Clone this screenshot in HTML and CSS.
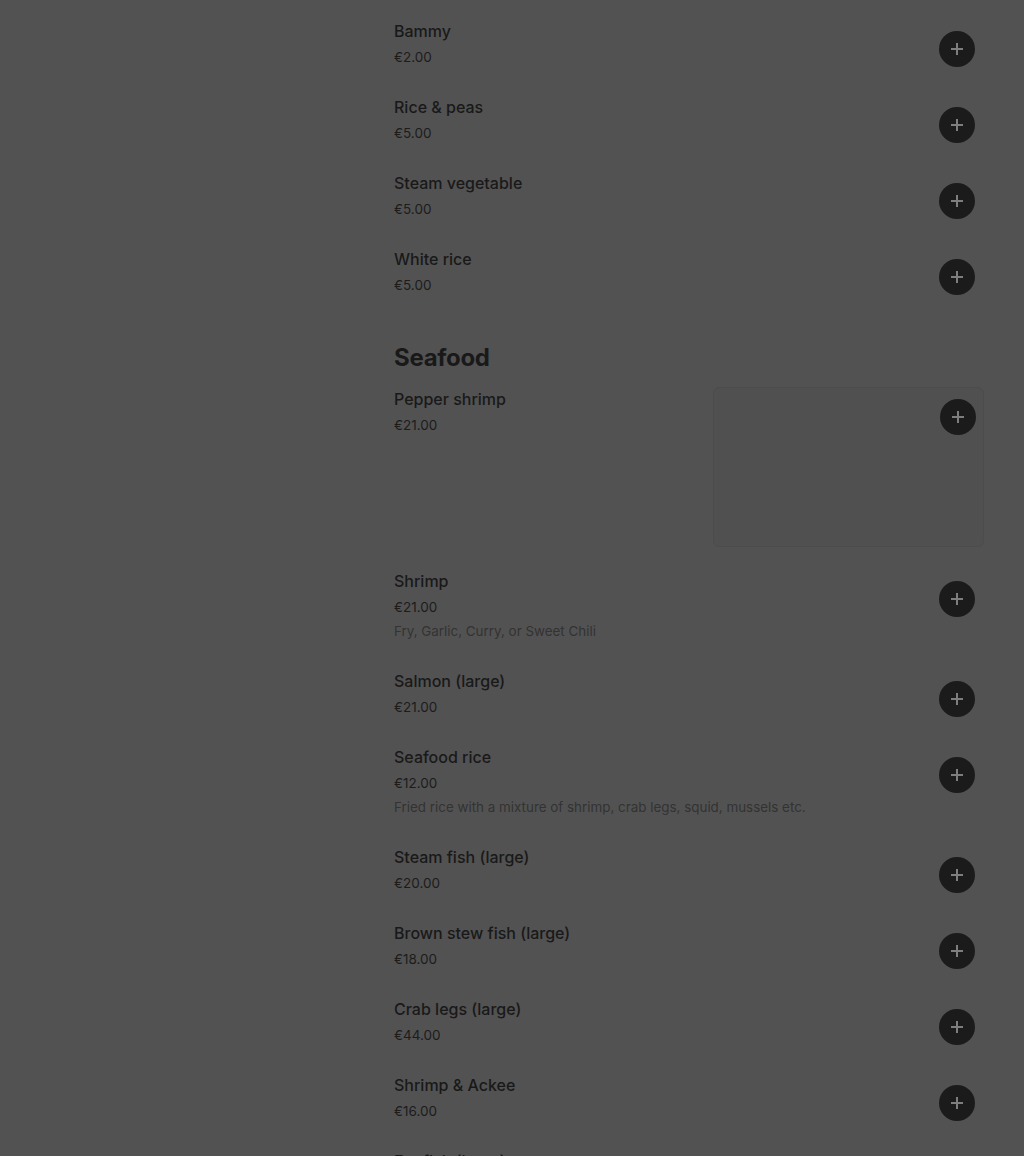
FILE: index.html
```html
<!DOCTYPE html>
<html lang="en">
  <head>
    <meta charset="UTF-8" />
    <meta name="viewport" content="width=device-width, initial-scale=1.0" />
    <title>Menu</title>
    <link rel="stylesheet" href="styles.css">
  </head>
  <body>
    <div class="menu">
      <!-- Sides -->
      <div class="item">
        <div class="item-info">
          <h3>Bammy</h3>
          <p class="price">€2.00</p>
        </div>
        <button class="add" aria-label="Add"><span></span></button>
      </div>
      <div class="item">
        <div class="item-info">
          <h3>Rice &amp; peas</h3>
          <p class="price">€5.00</p>
        </div>
        <button class="add" aria-label="Add"><span></span></button>
      </div>
      <div class="item">
        <div class="item-info">
          <h3>Steam vegetable</h3>
          <p class="price">€5.00</p>
        </div>
        <button class="add" aria-label="Add"><span></span></button>
      </div>
      <div class="item">
        <div class="item-info">
          <h3>White rice</h3>
          <p class="price">€5.00</p>
        </div>
        <button class="add" aria-label="Add"><span></span></button>
      </div>

      <!-- Seafood -->
      <h2 class="section-title">Seafood</h2>
      <div class="item with-image">
        <div class="item-info">
          <h3>Pepper shrimp</h3>
          <p class="price">€21.00</p>
        </div>
        <div class="item-image">
          <button class="add" aria-label="Add"><span></span></button>
        </div>
      </div>
      <div class="item">
        <div class="item-info">
          <h3>Shrimp</h3>
          <p class="price">€21.00</p>
          <p class="desc">Fry, Garlic, Curry, or Sweet Chili</p>
        </div>
        <button class="add" aria-label="Add"><span></span></button>
      </div>
      <div class="item">
        <div class="item-info">
          <h3>Salmon (large)</h3>
          <p class="price">€21.00</p>
        </div>
        <button class="add" aria-label="Add"><span></span></button>
      </div>
      <div class="item">
        <div class="item-info">
          <h3>Seafood rice</h3>
          <p class="price">€12.00</p>
          <p class="desc">Fried rice with a mixture of shrimp, crab legs, squid, mussels etc.</p>
        </div>
        <button class="add" aria-label="Add"><span></span></button>
      </div>
      <div class="item">
        <div class="item-info">
          <h3>Steam fish (large)</h3>
          <p class="price">€20.00</p>
        </div>
        <button class="add" aria-label="Add"><span></span></button>
      </div>
      <div class="item">
        <div class="item-info">
          <h3>Brown stew fish (large)</h3>
          <p class="price">€18.00</p>
        </div>
        <button class="add" aria-label="Add"><span></span></button>
      </div>
      <div class="item">
        <div class="item-info">
          <h3>Crab legs (large)</h3>
          <p class="price">€44.00</p>
        </div>
        <button class="add" aria-label="Add"><span></span></button>
      </div>
      <div class="item">
        <div class="item-info">
          <h3>Shrimp &amp; Ackee</h3>
          <p class="price">€16.00</p>
        </div>
        <button class="add" aria-label="Add"><span></span></button>
      </div>
      <div class="item">
        <div class="item-info">
          <h3>Fry fish (large)</h3>
          <p class="price">€18.00</p>
        </div>
        <button class="add" aria-label="Add"><span></span></button>
      </div>
    </div>
  </body>
</html>
```

FILE: styles.css
```css
* {
  margin: 0;
  padding: 0;
  box-sizing: border-box;
}

html,
body {
  height: 100%;
  overflow: hidden;
}

body {
  font-family: Inter, "Liberation Sans", Arial, sans-serif;
  background-color: #525252;
  color: #161616;
}

.menu {
  width: 590px;
  margin-left: 394px;
  padding-top: 7px;
}

.item {
  display: flex;
  justify-content: space-between;
  align-items: flex-start;
  padding: 12px 0 14px;
}

.item-info h3 {
  font-size: 16px;
  font-weight: 500;
  line-height: 24px;
  color: #191919;
}

.price {
  font-size: 13.5px;
  font-weight: 400;
  line-height: 24px;
  margin-top: 2px;
  color: #1c1c1c;
}

.desc {
  font-size: 13.4px;
  line-height: 24px;
  color: #333;
}

.section-title {
  font-size: 24px;
  font-weight: 700;
  line-height: 32px;
  margin-top: 31px;
  margin-bottom: 1px;
  color: #191919;
  letter-spacing: -0.3px;
}

.add {
  width: 36px;
  height: 36px;
  border-radius: 50%;
  border: none;
  background-color: #1b1b1b;
  margin-top: 12px;
  margin-right: 9px;
  display: flex;
  align-items: center;
  justify-content: center;
  cursor: pointer;
  flex-shrink: 0;
}

.add span {
  position: relative;
  width: 12px;
  height: 12px;
}

.add span::before,
.add span::after {
  content: "";
  position: absolute;
  background-color: #7e7e7e;
}

.add span::before {
  left: 0;
  top: 5px;
  width: 12px;
  height: 2px;
}

.add span::after {
  left: 5px;
  top: 0;
  width: 2px;
  height: 12px;
}

.item.with-image {
  padding-bottom: 10px;
}

.item-image {
  width: 271px;
  height: 160px;
  border-radius: 6px;
  background-color: #505050;
  border: 1px solid #4c4c4c;
  display: flex;
  justify-content: flex-end;
  align-items: flex-start;
}

.item-image .add {
  margin-top: 11px;
  margin-right: 7px;
}
```
